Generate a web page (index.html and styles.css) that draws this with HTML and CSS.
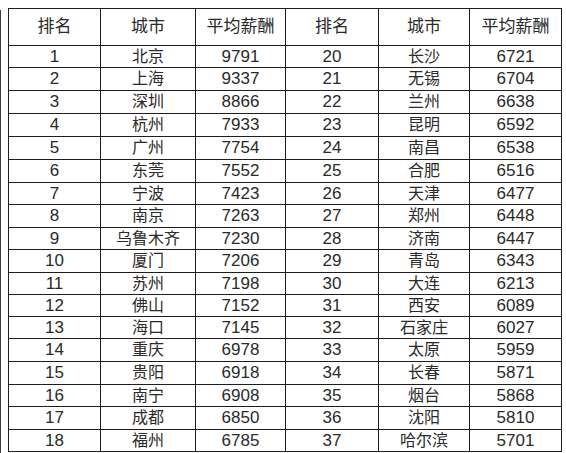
FILE: index.html
```html
<!DOCTYPE html>
<html lang="zh">
<head>
<meta charset="utf-8">
<link rel="stylesheet" href="styles.css">
</head>
<body>
<div class="page">
  <div class="edge"></div>
  <table class="salary">
    <colgroup>
      <col class="c1"><col class="c2"><col class="c3"><col class="c4"><col class="c5"><col class="c6">
    </colgroup>
    <thead>
      <tr class="head"><th>排名</th><th>城市</th><th>平均薪酬</th><th>排名</th><th>城市</th><th>平均薪酬</th></tr>
    </thead>
    <tbody>
      <tr class="s"><td>1</td><td>北京</td><td>9791</td><td>20</td><td>长沙</td><td>6721</td></tr>
      <tr class="t"><td>2</td><td>上海</td><td>9337</td><td>21</td><td>无锡</td><td>6704</td></tr>
      <tr class="t"><td>3</td><td>深圳</td><td>8866</td><td>22</td><td>兰州</td><td>6638</td></tr>
      <tr class="t"><td>4</td><td>杭州</td><td>7933</td><td>23</td><td>昆明</td><td>6592</td></tr>
      <tr class="t"><td>5</td><td>广州</td><td>7754</td><td>24</td><td>南昌</td><td>6538</td></tr>
      <tr class="t"><td>6</td><td>东莞</td><td>7552</td><td>25</td><td>合肥</td><td>6516</td></tr>
      <tr class="s"><td>7</td><td>宁波</td><td>7423</td><td>26</td><td>天津</td><td>6477</td></tr>
      <tr class="t"><td>8</td><td>南京</td><td>7263</td><td>27</td><td>郑州</td><td>6448</td></tr>
      <tr class="s"><td>9</td><td>乌鲁木齐</td><td>7230</td><td>28</td><td>济南</td><td>6447</td></tr>
      <tr class="t"><td>10</td><td>厦门</td><td>7206</td><td>29</td><td>青岛</td><td>6343</td></tr>
      <tr class="s"><td>11</td><td>苏州</td><td>7198</td><td>30</td><td>大连</td><td>6213</td></tr>
      <tr class="s"><td>12</td><td>佛山</td><td>7152</td><td>31</td><td>西安</td><td>6089</td></tr>
      <tr class="s"><td>13</td><td>海口</td><td>7145</td><td>32</td><td>石家庄</td><td>6027</td></tr>
      <tr class="t"><td>14</td><td>重庆</td><td>6978</td><td>33</td><td>太原</td><td>5959</td></tr>
      <tr class="t"><td>15</td><td>贵阳</td><td>6918</td><td>34</td><td>长春</td><td>5871</td></tr>
      <tr class="s"><td>16</td><td>南宁</td><td>6908</td><td>35</td><td>烟台</td><td>5868</td></tr>
      <tr class="t"><td>17</td><td>成都</td><td>6850</td><td>36</td><td>沈阳</td><td>5810</td></tr>
      <tr class="s"><td>18</td><td>福州</td><td>6785</td><td>37</td><td>哈尔滨</td><td>5701</td></tr>
    </tbody>
  </table>
</div>
</body>
</html>
```
FILE: styles.css
```css
html, body {
  margin: 0;
  padding: 0;
  background: #ffffff;
}
.page {
  display: flex;
  align-items: flex-start;
  width: 566px;
  height: 453px;
  overflow: hidden;
}
.edge {
  width: 1px;
  height: 443px;
  margin-top: 10px;
  background: #3a3a3a;
  flex: none;
}
.salary {
  margin-left: 7px;
  margin-top: 8px;
  border-collapse: collapse;
  table-layout: fixed;
  width: 554px;
  font-family: "Liberation Sans", "Noto Sans CJK SC", sans-serif;
  color: #2a2a2a;
  font-size: 17px;
}
.c1 { width: 92px; }
.c2 { width: 95px; }
.c3 { width: 90px; }
.c4 { width: 93px; }
.c5 { width: 91px; }
.c6 { width: 92px; }
.salary th, .salary td {
  border: 1px solid #1e1e1e;
  padding: 0;
  text-align: center;
  vertical-align: middle;
  line-height: 18px;
}
.salary td:nth-child(3n+2) {
  font-size: 16px;
}
.salary th {
  font-weight: normal;
  font-size: 17px;
}
.head th { height: 36px; }
.s td { height: 21px; }
.t td { height: 22px; }
```
